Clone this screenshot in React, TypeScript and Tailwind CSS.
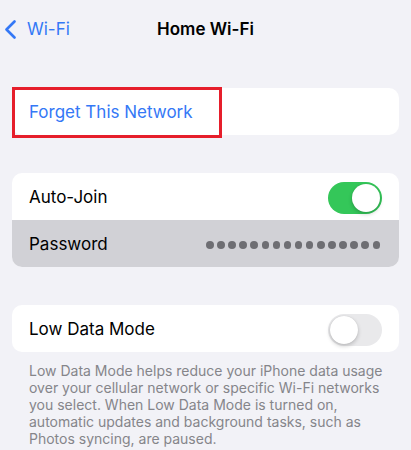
import { useState } from "react";

function Toggle({ on, onChange }: { on: boolean; onChange: () => void }) {
  return (
    <button
      onClick={onChange}
      className={`relative w-[54px] h-[32px] rounded-full transition-colors ${
        on ? "bg-[#34c759]" : "bg-[#e9e9eb]"
      }`}
    >
      <span
        className={`absolute top-[2px] w-[28px] h-[28px] rounded-full bg-white shadow-[0_2px_4px_rgba(0,0,0,0.2),0_0_1px_rgba(0,0,0,0.15)] transition-all ${
          on ? "left-[24px]" : "left-[2px]"
        }`}
      />
    </button>
  );
}

export default function App() {
  const [autoJoin, setAutoJoin] = useState(true);
  const [lowData, setLowData] = useState(false);

  return (
    <div
      className="w-[411px] h-[450px] overflow-hidden bg-[#f2f2f7] text-black"
      style={{ fontFamily: "Inter, 'Noto Sans', sans-serif" }}
    >
      {/* Nav bar */}
      <nav className="h-[57px] pt-[2px] grid grid-cols-[1fr_auto_1fr] items-center">
        <button className="flex items-center gap-[11px] pl-[4px] text-[#3478f6] text-[17px]">
          <svg width="12" height="19" viewBox="0 0 12 19" fill="none">
            <path
              d="M10.5 1.5L2.5 9.5L10.5 17.5"
              stroke="#3478f6"
              strokeWidth="2.6"
              strokeLinecap="round"
              strokeLinejoin="round"
            />
          </svg>
          <span>Wi-Fi</span>
        </button>
        <h1 className="text-[17px] font-semibold">Home Wi-Fi</h1>
        <div />
      </nav>

      <div className="px-[12px]">
        {/* Forget network */}
        <div className="relative mt-[31px] h-[47px] pt-[3px] bg-white rounded-[10px] flex items-center pl-[17px]">
          <span className="text-[17px] text-[#3478f6]">Forget This Network</span>
          <div className="absolute -top-px left-0 w-[210px] h-[51px] border-[3px] border-[#e61e2b]" />
        </div>

        {/* Auto-join / password */}
        <div className="mt-[38px] bg-white rounded-[10px] overflow-hidden">
          <div className="h-[47px] pt-[3px] flex items-center justify-between px-[17px]">
            <span className="text-[17px]">Auto-Join</span>
            <Toggle on={autoJoin} onChange={() => setAutoJoin(!autoJoin)} />
          </div>
          <div className="h-[47px] pt-[3px] flex items-center justify-between pl-[17px] pr-[19px] bg-[#d1d1d6]">
            <span className="text-[17px]">Password</span>
            <div className="flex gap-[3.6px]">
              {Array.from({ length: 16 }).map((_, i) => (
                <span key={i} className="w-[7.5px] h-[7.5px] rounded-full bg-[#6e6e73]" />
              ))}
            </div>
          </div>
        </div>

        {/* Low data mode */}
        <div className="mt-[38px] h-[47px] pt-[3px] bg-white rounded-[10px] flex items-center justify-between px-[17px]">
          <span className="text-[17px]">Low Data Mode</span>
          <Toggle on={lowData} onChange={() => setLowData(!lowData)} />
        </div>
        <p className="mt-[10px] pl-[17px] pr-[14px] text-[14px] leading-[17px] text-[#85858a]">
          Low Data Mode helps reduce your iPhone data usage over your cellular network or specific Wi-Fi networks
          you select. When Low Data Mode is turned on, automatic updates and background tasks, such as Photos
          syncing, are paused.
        </p>
      </div>
    </div>
  );
}
